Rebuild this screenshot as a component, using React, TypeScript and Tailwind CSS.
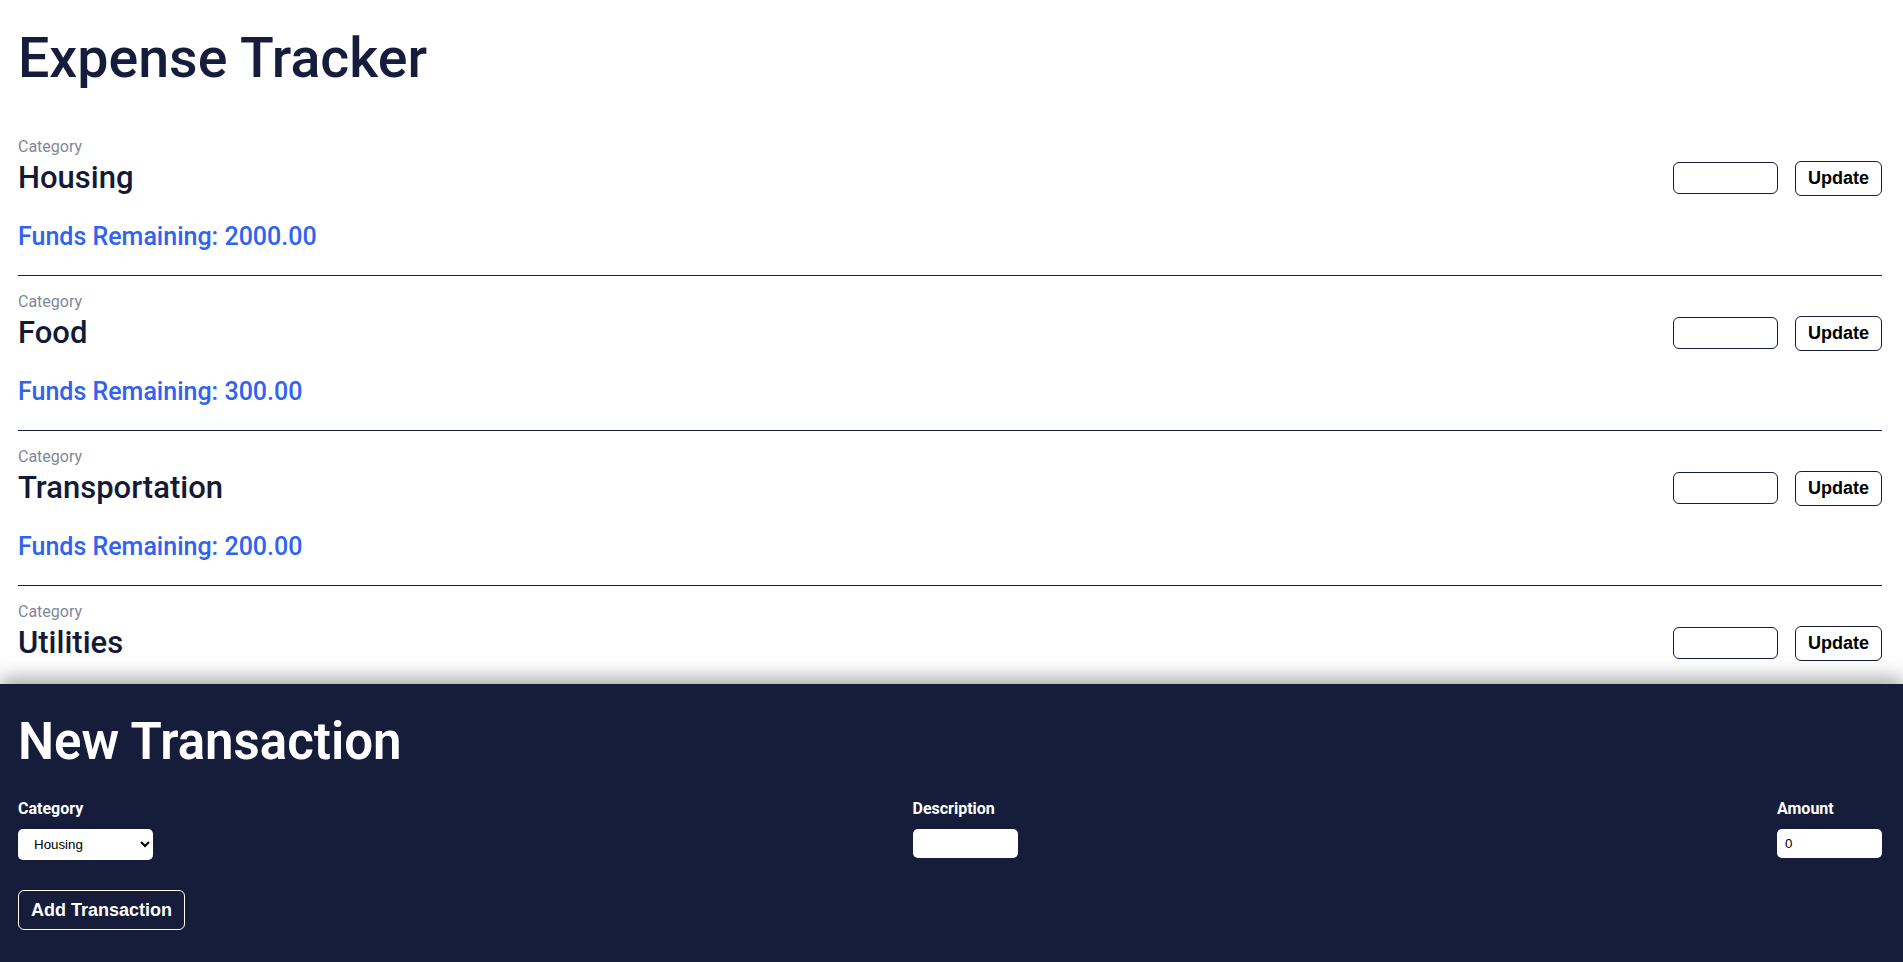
import React, { useState } from "react";

interface Category {
  name: string;
  funds: number;
}

const initialCategories: Category[] = [
  { name: "Housing", funds: 2000 },
  { name: "Food", funds: 300 },
  { name: "Transportation", funds: 200 },
  { name: "Utilities", funds: 150 },
];

const sans = "font-['Roboto','Noto_Sans',sans-serif]";
const arial = "font-['Liberation_Sans',Arial,sans-serif]";

function CategoryRow({ cat }: { cat: Category }) {
  const [value, setValue] = useState("");

  return (
    <div className="pt-[16px] pb-[23px] border-b border-[#161c3c]">
      <div className="text-[16px] leading-[19px] text-[#7f879c]">Category</div>
      <div className="mt-[3px] flex items-center justify-between">
        <h2 className="text-[31px] leading-[38px] font-medium text-[#141a36]">{cat.name}</h2>
        <div className="flex items-center gap-[17px]">
          <input
            type="number"
            value={value}
            onChange={(e) => setValue(e.target.value)}
            className="w-[105px] h-[32px] rounded-[6px] border border-[#161c3c] bg-white px-2 outline-none"
          />
          <button
            className={`${arial} h-[35px] px-[12px] rounded-[6px] border border-[#161c3c] bg-white text-[18px] font-bold text-black`}
          >
            Update
          </button>
        </div>
      </div>
      <div className="mt-[24px] text-[25px] leading-[31px] font-medium text-[#2f63f0]">
        Funds Remaining: {cat.funds.toFixed(2)}
      </div>
    </div>
  );
}

export default function App() {
  const [categories] = useState<Category[]>(initialCategories);
  const [category, setCategory] = useState("Housing");
  const [description, setDescription] = useState("");
  const [amount, setAmount] = useState("0");

  return (
    <div className={`${sans} h-screen flex flex-col bg-white overflow-hidden`}>
      <div className="flex-1 overflow-hidden pl-[18px] pr-[21px]">
        <h1 className="pt-[25px] mb-[29px] text-[55.5px] leading-[67px] font-medium text-[#161c3c]">
          Expense Tracker
        </h1>
        {categories.map((cat) => (
          <CategoryRow key={cat.name} cat={cat} />
        ))}
      </div>

      {/* new transaction */}
      <div className="relative z-10 shrink-0 h-[278px] bg-[#161d3a] pl-[18px] pr-[21px] pt-[27px] shadow-[0_-6px_18px_rgba(0,0,0,0.35)]">
        <h2 className="text-[51px] leading-[62px] font-semibold text-white">New Transaction</h2>

        <div className="mt-[27px] flex justify-between">
          <div className="flex flex-col">
            <label className="text-[16px] leading-[18px] font-bold text-white">Category</label>
            <select
              value={category}
              onChange={(e) => setCategory(e.target.value)}
              className={`${arial} mt-[11px] w-[135px] h-[31px] rounded-[5px] bg-white pl-[12px] pr-[4px] text-[13.33px] text-black outline-none`}
            >
              {categories.map((c) => (
                <option key={c.name}>{c.name}</option>
              ))}
            </select>
          </div>
          <div className="flex flex-col">
            <label className="text-[16px] leading-[18px] font-bold text-white">Description</label>
            <input
              value={description}
              onChange={(e) => setDescription(e.target.value)}
              className={`${arial} mt-[11px] w-[105px] h-[29px] rounded-[5px] bg-white px-2 text-[13.33px] text-black outline-none`}
            />
          </div>
          <div className="flex flex-col">
            <label className="text-[16px] leading-[18px] font-bold text-white">Amount</label>
            <input
              type="number"
              value={amount}
              onChange={(e) => setAmount(e.target.value)}
              className={`${arial} mt-[11px] w-[105px] h-[29px] rounded-[5px] bg-white px-2 text-[13.33px] text-black outline-none`}
            />
          </div>
        </div>

        <button
          className={`${arial} mt-[30px] h-[40px] px-[12px] rounded-[6px] border border-white text-[18px] font-bold text-white`}
        >
          Add Transaction
        </button>
      </div>
    </div>
  );
}
